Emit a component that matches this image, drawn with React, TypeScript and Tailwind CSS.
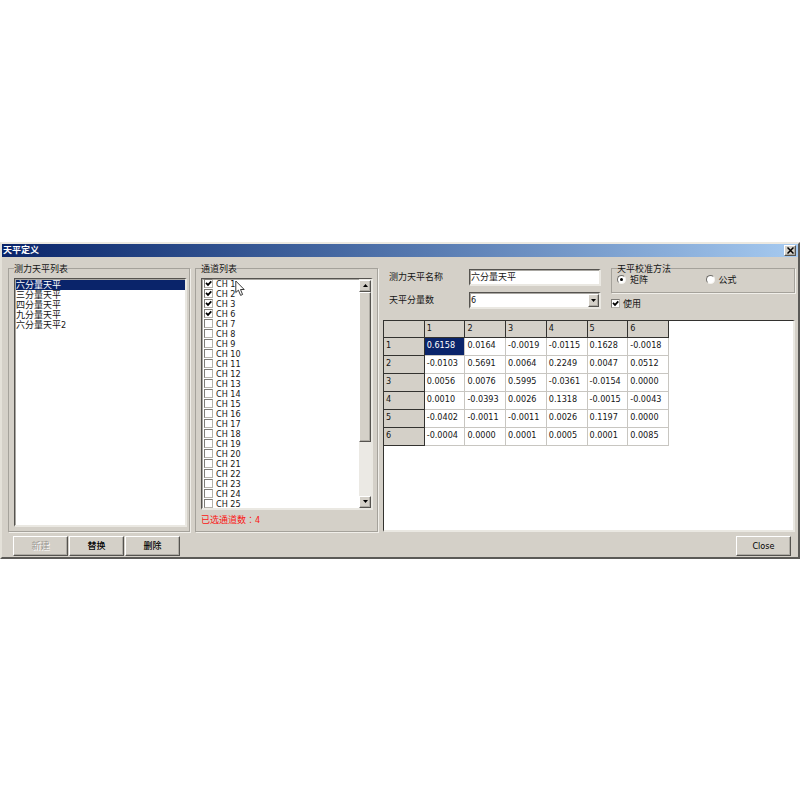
import { useState, type ReactNode } from "react";
import clsx from "clsx";

const BALANCES = ["六分量天平", "三分量天平", "四分量天平", "九分量天平", "六分量天平2"];

const CHANNELS = [1, 2, 3, 6, 7, 8, 9, 10, 11, 12, 13, 14, 15, 16, 17, 18, 19, 20, 21, 22, 23, 24, 25];

const MATRIX = [
    ["0.6158", "0.0164", "-0.0019", "-0.0115", "0.1628", "-0.0018"],
    ["-0.0103", "0.5691", "0.0064", "0.2249", "0.0047", "0.0512"],
    ["0.0056", "0.0076", "0.5995", "-0.0361", "-0.0154", "0.0000"],
    ["0.0010", "-0.0393", "0.0026", "0.1318", "-0.0015", "-0.0043"],
    ["-0.0402", "-0.0011", "-0.0011", "0.0026", "0.1197", "0.0000"],
    ["-0.0004", "0.0000", "0.0001", "0.0005", "0.0001", "0.0085"],
];

const SUNKEN =
    "bg-white border border-r-2 border-b-2 border-t-[#55534f] border-l-[#55534f] border-r-[#eae8e2] border-b-[#eae8e2] shadow-[inset_1px_1px_0_#a9a7a2]";
const RAISED = "bg-[#d4d0c8] border border-t-white border-l-white border-r-[#55534f] border-b-[#55534f] shadow-[inset_-1px_-1px_0_#aeaba4]";

const GroupBox = ({ title, className, children }: { title: string; className?: string; children: ReactNode }) => (
    <fieldset className={clsx("min-w-0 border border-[#a5a29b] shadow-[1px_1px_0_#f1efea]", className)}>
        <legend className="bg-[#d4d0c8] leading-3">{title}</legend>
        {children}
    </fieldset>
);

const CheckBox = ({ label, checked, onChange }: { label: string; checked: boolean; onChange: () => void }) => (
    <label className="flex items-center gap-[3px]">
        <span className="relative block size-[9px] shrink-0">
            <input
                type="checkbox"
                checked={checked}
                onChange={onChange}
                className="block size-[9px] appearance-none border border-[#7d7b76] border-r-[#b5b2ab] border-b-[#b5b2ab] bg-white"
            />
            {checked && (
                <svg viewBox="0 0 9 9" className="pointer-events-none absolute inset-0 size-[9px]">
                    <path d="M2 3.8 L4 5.9 L7.3 2.4" fill="none" stroke="#000" strokeWidth="1.7" />
                </svg>
            )}
        </span>
        {label}
    </label>
);

const Radio = ({ label, checked, onChange }: { label: string; checked: boolean; onChange: () => void }) => (
    <label className="flex items-center gap-1">
        <span className="relative block size-[9px]">
            <input
                type="radio"
                name="method"
                checked={checked}
                onChange={onChange}
                className="block size-[9px] appearance-none rounded-full border border-[#6f6d69] border-r-[#f4f2ee] border-b-[#f4f2ee] bg-white"
            />
            {checked && <span className="pointer-events-none absolute inset-[3px] rounded-full bg-black" />}
        </span>
        {label}
    </label>
);

const Arrow = ({ up }: { up?: boolean }) => (
    <svg viewBox="0 0 5 3" className="h-[3px] w-[5px]">
        <path d={up ? "M0 3 L2.5 0 L5 3 Z" : "M0 0 L5 0 L2.5 3 Z"} fill="#000" />
    </svg>
);

const PushButton = ({ children, disabled }: { children: ReactNode; disabled?: boolean }) => (
    <button
        type="button"
        disabled={disabled}
        className={clsx(
            "h-5 w-[55px] pt-[1px]",
            RAISED,
            disabled ? "text-[#9a9791] [text-shadow:1px_1px_0_#fff]" : "font-medium text-black",
        )}
    >
        {children}
    </button>
);

export default function App() {
    const [balance, setBalance] = useState(0);
    const [selected, setSelected] = useState([1, 2, 3, 6]);
    const [method, setMethod] = useState("matrix");
    const [enabled, setEnabled] = useState(true);
    const [name, setName] = useState("六分量天平");

    const toggleChannel = (ch: number) =>
        setSelected((prev) => (prev.includes(ch) ? prev.filter((c) => c !== ch) : [...prev, ch]));

    return (
        <div className="flex min-h-screen items-center bg-white font-['DejaVu_Sans_Condensed','Noto_Sans_CJK_SC',sans-serif] text-[9px] leading-[10px] text-[#151515]">
            <div className="w-full border-2 border-t-[#ece9e1] border-l-[#e4e1d9] border-r-[#5b5a57] border-b-[#5b5a57] bg-[#d4d0c8]">
                {/* Title bar */}
                <header className="flex h-[13px] items-center justify-between bg-linear-to-r from-[#0a246a] to-[#a6caf0] pr-[2px] pl-[1px]">
                    <h1 className="font-bold text-white">天平定义</h1>
                    <button type="button" aria-label="关闭" className={clsx("flex h-[11px] w-3 items-center justify-center", RAISED)}>
                        <svg viewBox="0 0 7 7" className="size-[7px]">
                            <path d="M0.5 0.5 L6.5 6.5 M6.5 0.5 L0.5 6.5" stroke="#000" strokeWidth="1.5" />
                        </svg>
                    </button>
                </header>

                <main className="grid grid-cols-[182px_183px_1fr] gap-[5px] pt-[6px] pr-[3px] pl-[6px]">
                    <GroupBox title="测力天平列表" className="pr-[2px] pb-[4px] pl-[5px]">
                        <ul role="listbox" aria-label="测力天平列表" className={clsx("mt-[3px] h-[249px] pt-[1px] pl-[1px]", SUNKEN)}>
                            {BALANCES.map((item, i) => (
                                <li
                                    key={item}
                                    role="option"
                                    aria-selected={i === balance}
                                    onClick={() => setBalance(i)}
                                    className={clsx("h-[10px]", i === balance && "bg-[#0a246a] text-white")}
                                >
                                    {item}
                                </li>
                            ))}
                        </ul>
                    </GroupBox>

                    <GroupBox title="通道列表" className="relative pr-[4px] pl-[5px]">
                        <div className={clsx("mt-[3px] flex h-[232px] justify-between overflow-hidden", SUNKEN)}>
                            <ul className="pl-[2px]">
                                {CHANNELS.map((ch) => (
                                    <li key={ch} className="h-[10px]">
                                        <CheckBox label={`CH ${ch}`} checked={selected.includes(ch)} onChange={() => toggleChannel(ch)} />
                                    </li>
                                ))}
                            </ul>
                            {/* Scroll bar */}
                            <div className="flex w-3 flex-col bg-[#ebe9e4] pt-[1px]">
                                <button type="button" aria-label="向上" className={clsx("flex h-3 items-center justify-center", RAISED)}>
                                    <Arrow up />
                                </button>
                                <div className={clsx("h-[150px]", RAISED)} />
                                <button type="button" aria-label="向下" className={clsx("mt-auto flex h-3 items-center justify-center", RAISED)}>
                                    <Arrow />
                                </button>
                            </div>
                        </div>
                        <p className="mt-[5px] text-[#fb1414]">
                            已选通道数
                            <span lang="zh-TW" className="font-['Noto_Sans_CJK_TC',sans-serif]">：</span>
                            {selected.length}
                        </p>
                        <svg viewBox="0 0 10 17" className="pointer-events-none absolute top-[5px] left-[39px] h-[17px] w-[10px]">
                            <path
                                d="M0.8 1 L0.8 12.5 L3.4 10.2 L5.6 15.4 L7.6 14.5 L5.5 9.5 L9.2 9.5 Z"
                                fill="#fff"
                                stroke="#222"
                                strokeWidth="0.9"
                            />
                        </svg>
                    </GroupBox>

                    <section className="flex min-w-0 flex-col">
                        <div className="flex h-[57px] gap-[10px] pl-[6px]">
                            <div className="grid flex-1 grid-cols-[80px_1fr] content-start items-center gap-y-[6px] pt-[6px]">
                                <label htmlFor="name">测力天平名称</label>
                                <input
                                    id="name"
                                    value={name}
                                    onChange={(e) => setName(e.target.value)}
                                    className={clsx("h-[17px] w-full min-w-0 pl-[1px] outline-none", SUNKEN)}
                                />
                                <label htmlFor="count">天平分量数</label>
                                <div className="relative">
                                    <select id="count" defaultValue="6" className={clsx("block h-[17px] w-full appearance-none pl-[1px]", SUNKEN)}>
                                        <option>3</option>
                                        <option>4</option>
                                        <option>6</option>
                                        <option>9</option>
                                    </select>
                                    <span className={clsx("pointer-events-none absolute top-[2px] right-[2px] flex h-[13px] w-[11px] items-center justify-center", RAISED)}>
                                        <Arrow />
                                    </span>
                                </div>
                            </div>
                            <div className="w-[184px]">
                                <GroupBox title="天平校准方法" className="h-[30px] pl-[5px]">
                                    <div className="grid grid-cols-2">
                                        <Radio label="矩阵" checked={method === "matrix"} onChange={() => setMethod("matrix")} />
                                        <Radio label="公式" checked={method === "formula"} onChange={() => setMethod("formula")} />
                                    </div>
                                </GroupBox>
                                <div className="pt-[6px]">
                                    <CheckBox label="使用" checked={enabled} onChange={() => setEnabled(!enabled)} />
                                </div>
                            </div>
                        </div>

                        <div className="flex-1 border border-r-2 border-b-2 border-t-[#33322f] border-r-[#eae8e2] border-b-[#eae8e2] border-l-[#33322f] bg-white">
                            <table className="w-[285px] table-fixed border-separate border-spacing-0 text-left">
                                <thead>
                                    <tr>
                                        {["", "1", "2", "3", "4", "5", "6"].map((h) => (
                                            <th key={h} className="h-[17px] border-r border-b border-[#33322f] bg-[#d4d0c8] p-0 pb-[1px] pl-[2px] font-normal">
                                                {h}
                                            </th>
                                        ))}
                                    </tr>
                                </thead>
                                <tbody>
                                    {MATRIX.map((row, r) => (
                                        <tr key={r}>
                                            <th className="h-[18px] border-r border-b border-[#33322f] bg-[#d4d0c8] p-0 pb-[2px] pl-[2px] font-normal">
                                                {r + 1}
                                            </th>
                                            {row.map((value, c) => (
                                                <td
                                                    key={c}
                                                    className={clsx(
                                                        "h-[18px] border-r border-b border-[#c8c6c1] p-0 pb-[2px] pl-[2px]",
                                                        r === 0 && c === 0 && "bg-[#0a246a] text-white",
                                                    )}
                                                >
                                                    {value}
                                                </td>
                                            ))}
                                        </tr>
                                    ))}
                                </tbody>
                            </table>
                        </div>
                    </section>
                </main>

                <footer className="flex gap-[1px] pt-1 pr-[7px] pb-[1px] pl-[11px]">
                    <PushButton disabled>新建</PushButton>
                    <PushButton>替换</PushButton>
                    <PushButton>删除</PushButton>
                    <div className="ml-auto">
                        <PushButton>Close</PushButton>
                    </div>
                </footer>
            </div>
        </div>
    );
}
